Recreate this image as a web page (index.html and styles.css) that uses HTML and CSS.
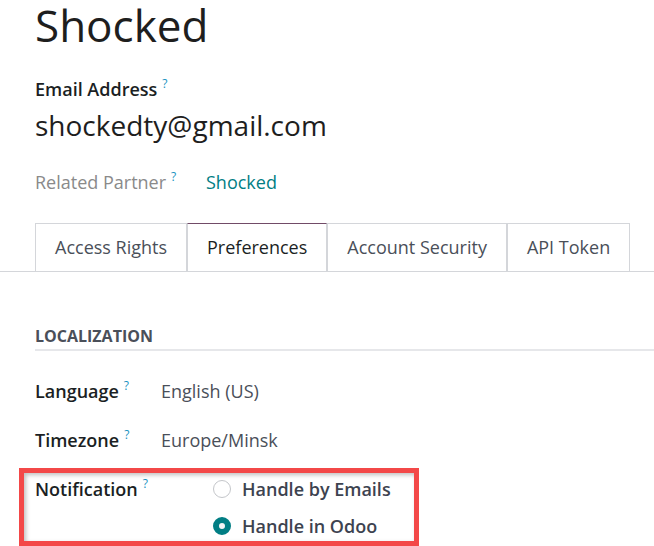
FILE: index.html
```html
<!DOCTYPE html>
<html lang="en">
<head>
    <meta charset="UTF-8">
    <meta name="viewport" content="width=device-width, initial-scale=1.0">
    <title>Shocked - User</title>
    <link rel="stylesheet" href="styles.css">
</head>
<body>

    <div class="sheet">
        <h1 class="title">Shocked</h1>

        <div class="field-label">Email Address<sup class="help">?</sup></div>
        <div class="email">shockedty@gmail.com</div>

        <div class="partner-row">
            <span class="muted-label">Related Partner<sup class="help">?</sup></span>
            <a class="partner-link" href="#">Shocked</a>
        </div>

        <ul class="tabs">
            <li class="tab">Access Rights</li>
            <li class="tab active">Preferences</li>
            <li class="tab">Account Security</li>
            <li class="tab">API Token</li>
        </ul>

        <div class="section-title">LOCALIZATION</div>

        <div class="row">
            <span class="label">Language<sup class="help">?</sup></span>
            <span class="value">English (US)</span>
        </div>
        <div class="row">
            <span class="label">Timezone<sup class="help">?</sup></span>
            <span class="value">Europe/Minsk</span>
        </div>
        <div class="row notify">
            <span class="label">Notification<sup class="help">?</sup></span>
            <div class="radios">
                <label class="radio"><span class="dot"></span>Handle by Emails</label>
                <label class="radio"><span class="dot checked"></span>Handle in Odoo</label>
            </div>
            <!-- annotation box drawn over the notification field -->
            <div class="highlight"></div>
        </div>
    </div>

</body>
</html>
```

FILE: styles.css
```css
html, body {
    margin: 0;
    height: 100%;
    overflow: hidden;
    background: #fff;
}
body {
    font-family: "Open Sans", "Noto Sans", sans-serif;
    color: #1f2328;
}
.sheet {
    padding-left: 35px;
}
.title {
    margin: 0;
    padding-top: 2px;
    font-size: 44px;
    line-height: 46px;
    font-weight: 400;
    color: #1e1e1e;
}
.help {
    font-size: 12px;
    color: #1a93bf;
    margin-left: 5px;
    vertical-align: top;
    position: relative;
    top: -5px;
    font-weight: 400;
}
.field-label {
    margin-top: 29px;
    font-size: 18px;
    line-height: 24px;
    font-weight: 600;
    color: #1b1f24;
}
.email {
    margin-top: 7px;
    font-size: 28px;
    line-height: 34px;
    color: #1e1e1e;
}
.partner-row {
    margin-top: 28px;
    display: flex;
    font-size: 18px;
    line-height: 24px;
}
.muted-label {
    width: 171px;
    color: #8a8a8a;
}
.partner-link {
    color: #017e84;
    text-decoration: none;
}
.tabs {
    list-style: none;
    margin: 29px 0 0 -35px;
    padding: 0 0 0 35px;
    display: flex;
    border-bottom: 1px solid #d4d6da;
}
.tab {
    border: 1px solid #d4d6da;
    border-bottom: none;
    padding: 11px 19px 12px;
    font-size: 18px;
    line-height: 24px;
    color: #4a4f59;
}
.tab.active {
    border-top-color: #714b67;
    color: #1b1f24;
}
.section-title {
    margin-top: 53px;
    padding-bottom: 2px;
    border-bottom: 2px solid #e6e7ea;
    font-size: 16px;
    line-height: 22px;
    font-weight: 700;
    color: #4a4f59;
}
.row {
    display: flex;
    margin-top: 28px;
    font-size: 18px;
    line-height: 24px;
}
.row + .row {
    margin-top: 25px;
}
.label {
    width: 126px;
    flex-shrink: 0;
    font-weight: 600;
    color: #1b1f24;
}
.value {
    color: #4a4f59;
}
.notify {
    position: relative;
}
.radios {
    margin-left: 52px;
    display: flex;
    flex-direction: column;
    gap: 13px;
}
.radio {
    display: flex;
    align-items: center;
    gap: 11px;
    font-weight: 600;
    color: #3d4350;
}
.dot {
    width: 18px;
    height: 18px;
    border: 1px solid #c4c6ca;
    border-radius: 50%;
    box-sizing: border-box;
    background: #fff;
}
.dot.checked {
    border: 6px solid #017e84;
    background: #f4f4f6;
}
.highlight {
    position: absolute;
    left: -16px;
    top: -9px;
    width: 400px;
    height: 78px;
    box-sizing: border-box;
    border: 5px solid #f34848;
    box-shadow: inset 2px 2px 4px rgba(0, 0, 0, 0.25);
}
```
